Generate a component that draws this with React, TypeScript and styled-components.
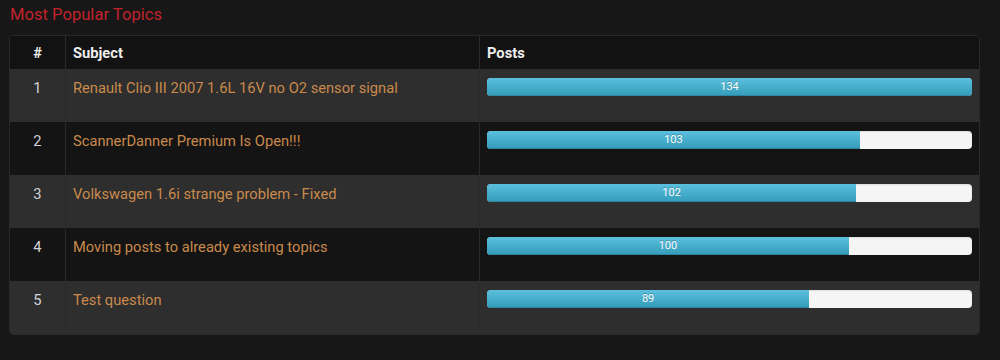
import React from "react";
import styled, { createGlobalStyle } from "styled-components";

const GlobalStyle = createGlobalStyle`
  html, body {
    margin: 0;
    padding: 0;
    background: #171717;
    font-family: Roboto, "Liberation Sans", Arial, sans-serif;
  }
`;

const Page = styled.div`
  width: 1000px;
  height: 360px;
  padding: 5px 20px 0 9px;
  box-sizing: border-box;
  background: #171717;
`;

const Title = styled.h3`
  margin: 0 0 11px 1px;
  font-size: 16.6px;
  line-height: 19px;
  font-weight: 400;
  color: #c1232c;
`;

const Table = styled.table`
  width: 971px;
  border-collapse: separate;
  border-spacing: 0;
  border: 1px solid #2a2a2a;
  border-radius: 4px;
  overflow: hidden;
  table-layout: fixed;
`;

const HeadCell = styled.th<{ $center?: boolean; $w?: number }>`
  width: ${(p) => (p.$w ? `${p.$w}px` : "auto")};
  height: 33px;
  padding: 0 7px;
  box-sizing: border-box;
  background: #121212;
  color: #eeeeee;
  font-size: 14.7px;
  font-weight: 700;
  text-align: ${(p) => (p.$center ? "center" : "left")};
  vertical-align: middle;
  & + & {
    border-left: 1px solid #2a2a2a;
  }
`;

const Row = styled.tr<{ $odd: boolean }>`
  background: ${(p) => (p.$odd ? "#2e2e2e" : "#141414")};
`;

const Cell = styled.td<{ $center?: boolean }>`
  padding: 8px 7px;
  border-top: 1px solid transparent;
  vertical-align: top;
  font-size: 14.7px;
  line-height: 20px;
  text-align: ${(p) => (p.$center ? "center" : "left")};
  color: #d2d2da;
  & + & {
    border-left: 1px solid #2a2a2a;
  }
`;

const Link = styled.a`
  color: #c98a4c;
  text-decoration: none;
`;

const Progress = styled.div`
  height: 18px;
  margin: 0 0 18px 0;
  border-radius: 4px;
  overflow: hidden;
  background: #f5f5f5;
  box-shadow: inset 0 1px 2px rgba(0, 0, 0, 0.1);
  display: flex;
`;

const Bar = styled.div`
  height: 100%;
  background: linear-gradient(to bottom, #5bc0de, #339bb9);
  box-shadow: inset 0 -1px 0 rgba(0, 0, 0, 0.15);
  color: #ffffff;
  font-size: 11px;
  line-height: 18px;
  text-align: center;
  text-shadow: 0 -1px 0 rgba(0, 0, 0, 0.25);
`;

const topics = [
  { subject: "Renault Clio III 2007 1.6L 16V no O2 sensor signal", posts: 134 },
  { subject: "ScannerDanner Premium Is Open!!!", posts: 103 },
  { subject: "Volkswagen 1.6i strange problem - Fixed", posts: 102 },
  { subject: "Moving posts to already existing topics", posts: 100 },
  { subject: "Test question", posts: 89 },
];

export default function App() {
  const max = Math.max(...topics.map((t) => t.posts));
  return (
    <Page>
      <GlobalStyle />
      <Title>Most Popular Topics</Title>
      <Table>
        <thead>
          <tr>
            <HeadCell $center $w={55}>#</HeadCell>
            <HeadCell $w={414}>Subject</HeadCell>
            <HeadCell>Posts</HeadCell>
          </tr>
        </thead>
        <tbody>
          {topics.map((t, i) => (
            <Row key={t.subject} $odd={i % 2 === 0}>
              <Cell $center>{i + 1}</Cell>
              <Cell>
                <Link href="#">{t.subject}</Link>
              </Cell>
              <Cell>
                <Progress>
                  <Bar style={{ width: `${(t.posts / max) * 100}%` }}>{t.posts}</Bar>
                </Progress>
              </Cell>
            </Row>
          ))}
        </tbody>
      </Table>
    </Page>
  );
}
